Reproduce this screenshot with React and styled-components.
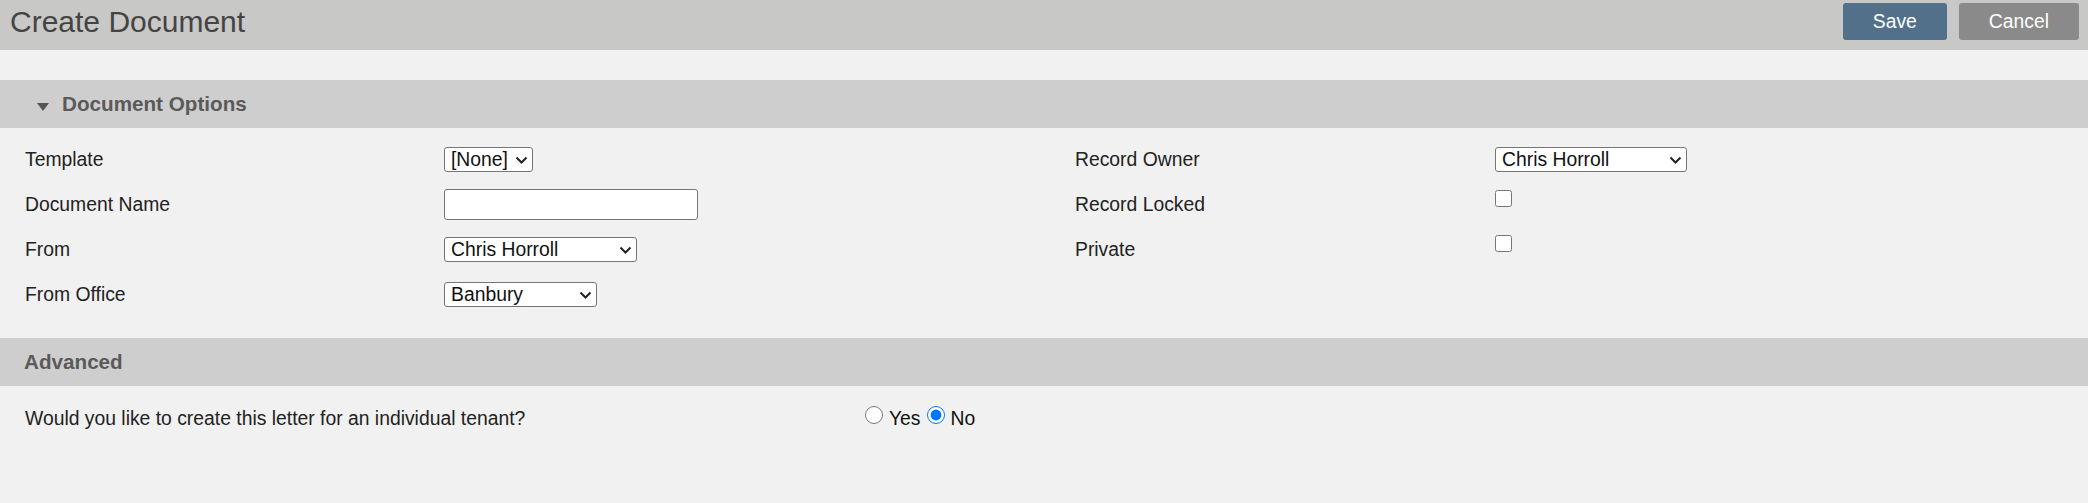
import React from 'react';
import styled, { createGlobalStyle } from 'styled-components';

const GlobalStyle = createGlobalStyle`
    html, body {
        margin: 0;
        padding: 0;
        background: #f1f1f1;
        font-family: 'Liberation Sans', Arial, sans-serif;
    }
`;

const Header = styled.header`
    display: flex;
    align-items: flex-start;
    height: 50px;
    padding: 0 9px 0 10px;
    background: #c8c8c6;
`;

const Title = styled.h1`
    flex: 1;
    margin: 0;
    padding-top: 5px;
    font-size: 30px;
    font-weight: 400;
    color: #444;
`;

const ButtonBar = styled.div`
    display: flex;
    gap: 12px;
    margin-top: 3px;
`;

const Button = styled.button`
    height: 37px;
    padding: 0 30px;
    border: 0;
    border-radius: 3px;
    background: ${p => (p.$primary ? '#52708a' : '#8a8a8a')};
    color: #fff;
    font-family: inherit;
    font-size: 19.33px;
    cursor: pointer;
`;

const Section = styled.section`
    margin-top: ${p => p.$gap || 0}px;
`;

const SectionBar = styled.div`
    display: flex;
    align-items: center;
    height: 48px;
    padding-left: 24px;
    background: #cecece;
`;

const Caret = styled.span`
    width: 0;
    height: 0;
    margin: 6px 13px 0 13px;
    border-left: 6px solid transparent;
    border-right: 6px solid transparent;
    border-top: 8px solid #555;
`;

const SectionTitle = styled.h2`
    margin: 0;
    font-size: 20.67px;
    font-weight: 700;
    color: #5a5a5a;
`;

const FormGrid = styled.div`
    display: grid;
    grid-template-columns: 419px 631px 420px 1fr;
    grid-auto-rows: 45px;
    padding: 9px 0 21px 25px;
`;

const Label = styled.label`
    align-self: center;
    font-size: 19.33px;
    color: #222;
`;

const Field = styled.div`
    display: flex;
    align-items: ${p => (p.$top ? 'flex-start' : 'center')};
    padding-top: ${p => (p.$top ? 8 : 0)}px;
`;

const SelectWrap = styled.span`
    position: relative;
    display: inline-flex;
`;

const Select = styled.select`
    appearance: none;
    box-sizing: border-box;
    width: ${p => p.$width}px;
    height: 25px;
    padding: 0 22px 0 6px;
    border: 1px solid #767676;
    border-radius: 3px;
    background: #fff;
    color: #111;
    font-family: inherit;
    font-size: 19.33px;
    line-height: 23px;
`;

const Chevron = styled.svg`
    position: absolute;
    right: 5px;
    top: 9px;
    pointer-events: none;
`;

const TextInput = styled.input`
    box-sizing: border-box;
    width: 254px;
    height: 31px;
    border: 1px solid #767676;
    border-radius: 3px;
    background: #fff;
    font-family: inherit;
    font-size: 19.33px;
`;

const Checkbox = styled.input`
    width: 17px;
    height: 17px;
    margin: 0;
`;

const QuestionRow = styled.div`
    display: grid;
    grid-template-columns: 840px auto;
    align-items: center;
    padding: 20px 0 0 25px;
    font-size: 19.33px;
    color: #222;
`;

const RadioGroup = styled.div`
    display: flex;
    align-items: center;
`;

const Radio = styled.input`
    width: 18px;
    height: 18px;
    margin: 0 6px 8px ${p => (p.$first ? 0 : 6)}px;
`;

const RadioText = styled.span`
    color: #111;
`;

const Dropdown = ({ width, children }) => (
    <SelectWrap>
        <Select $width={width} defaultValue="0">
            <option value="0">{children}</option>
        </Select>
        <Chevron width="13" height="8" viewBox="0 0 13 8">
            <polyline points="1.5,1.5 6.5,6.5 11.5,1.5" fill="none" stroke="#222" strokeWidth="2" />
        </Chevron>
    </SelectWrap>
);

export default function App() {
    return (
        <>
            <GlobalStyle />
            <Header>
                <Title>Create Document</Title>
                <ButtonBar>
                    <Button $primary>Save</Button>
                    <Button>Cancel</Button>
                </ButtonBar>
            </Header>

            <Section $gap={30}>
                <SectionBar>
                    <Caret />
                    <SectionTitle>Document Options</SectionTitle>
                </SectionBar>
                <FormGrid>
                    <Label>Template</Label>
                    <Field>
                        <Dropdown width={89}>[None]</Dropdown>
                    </Field>
                    <Label>Record Owner</Label>
                    <Field>
                        <Dropdown width={192}>Chris Horroll</Dropdown>
                    </Field>

                    <Label>Document Name</Label>
                    <Field>
                        <TextInput type="text" />
                    </Field>
                    <Label>Record Locked</Label>
                    <Field $top>
                        <Checkbox type="checkbox" />
                    </Field>

                    <Label>From</Label>
                    <Field>
                        <Dropdown width={193}>Chris Horroll</Dropdown>
                    </Field>
                    <Label>Private</Label>
                    <Field $top>
                        <Checkbox type="checkbox" />
                    </Field>

                    <Label>From Office</Label>
                    <Field>
                        <Dropdown width={153}>Banbury</Dropdown>
                    </Field>
                </FormGrid>
            </Section>

            <Section>
                <SectionBar>
                    <SectionTitle>Advanced</SectionTitle>
                </SectionBar>
                <QuestionRow>
                    <span>Would you like to create this letter for an individual tenant?</span>
                    <RadioGroup>
                        <Radio $first type="radio" name="tenant" id="tenant-yes" />
                        <RadioText>Yes</RadioText>
                        <Radio type="radio" name="tenant" id="tenant-no" defaultChecked />
                        <RadioText>No</RadioText>
                    </RadioGroup>
                </QuestionRow>
            </Section>
        </>
    );
}
